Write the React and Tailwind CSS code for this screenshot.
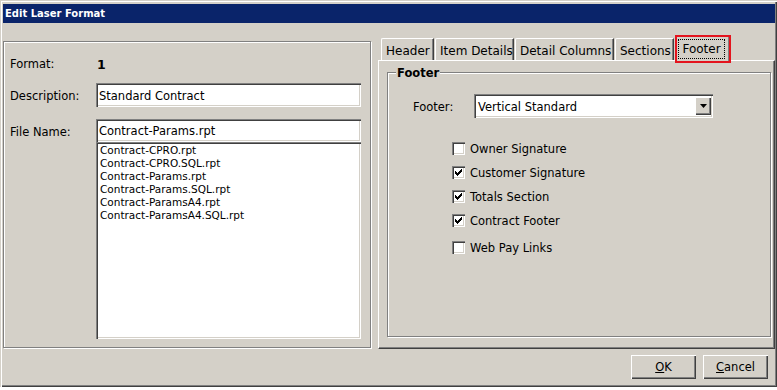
import React from "react";

const sunken =
  "shadow-[inset_1px_1px_0_#808080,inset_2px_2px_0_#404040,inset_-1px_-1px_0_#ffffff,inset_-2px_-2px_0_#d4d0c8]";
const raised =
  "shadow-[inset_1px_1px_0_#ffffff,inset_-1px_-1px_0_#404040,inset_-2px_-2px_0_#808080]";
const etched = "border border-[#808080] shadow-[inset_1px_1px_0_#ffffff,1px_1px_0_#ffffff]";

function Check({ checked, label }) {
  return (
    <div className="flex items-center h-[13px]">
      <div className={`w-[13px] h-[13px] bg-white ${sunken} flex items-center justify-center`}>
        {checked && (
          <svg width="7" height="7" viewBox="0 0 7 7" className="block">
            <path d="M0 2h1v1h1v1h1V3h1V2h1V1h1V0h1v3H6v1H5v1H4v1H3v1H2V6H1V5H0z" fill="#000" shapeRendering="crispEdges" />
          </svg>
        )}
      </div>
      <span className="ml-[5px] leading-[13px] pt-[2px]">{label}</span>
    </div>
  );
}

function Tab({ label, w, selected }) {
  if (selected) {
    return (
      <div
        className="relative z-10 h-[25px] -mb-[1px] bg-[#d4d0c8] border-t border-l border-white border-r border-r-[#404040] shadow-[inset_-1px_0_0_#808080] pl-[2px] pt-[2px]"
        style={{ width: w }}
      >
        <div className="w-[47px] h-[20px] border border-dotted border-black flex items-center justify-center">
          {label}
        </div>
        <div className="absolute left-[-1px] top-[-2px] w-[56px] h-[28px] border-2 border-[#e4141e]" />
      </div>
    );
  }
  return (
    <div
      className="h-[22px] bg-[#d4d0c8] border-t border-l border-white border-r border-r-[#404040] shadow-[inset_-1px_0_0_#808080] rounded-tl-[2px] flex items-center pl-[4px] pt-[3px]"
      style={{ width: w }}
    >
      {label}
    </div>
  );
}

export default function App() {
  const files = [
    "Contract-CPRO.rpt",
    "Contract-CPRO.SQL.rpt",
    "Contract-Params.rpt",
    "Contract-Params.SQL.rpt",
    "Contract-ParamsA4.rpt",
    "Contract-ParamsA4.SQL.rpt",
  ];
  return (
    <div
      className="w-[777px] h-[387px] bg-[#d4d0c8] pl-[3px] pt-[4px] pr-[2px] pb-[2px] flex flex-col text-[11.5px] text-black font-['DejaVu_Sans',sans-serif] shadow-[inset_1px_1px_0_#d4d0c8,inset_2px_2px_0_#ffffff,inset_-1px_-1px_0_#404040,inset_-2px_-2px_0_#808080]"
    >
      {/* Title bar */}
      <div className="h-[19px] bg-[#0a246a] text-white font-bold text-[10px] pl-[2px] flex items-center leading-none">
        Edit Laser Format
      </div>

      <div className="flex">
        {/* Left group */}
        <div className={`mt-[18px] w-[368px] h-[307px] ${etched} flex flex-col`}>
          <div className="mt-[12px] h-[18px] flex items-center pt-[4px]">
            <div className="w-[92px] pl-[6px]">Format:</div>
            <div className="pl-[1px] font-bold text-[12.5px]">1</div>
          </div>
          <div className="mt-[11px] h-[24px] flex items-center">
            <div className="w-[92px] pl-[6px] pt-[4px]">Description:</div>
            <div className={`w-[265px] h-[24px] bg-white ${sunken} pl-[3px] pt-[3px] flex items-center`}>
              Standard Contract
            </div>
          </div>
          <div className="mt-[12px] h-[23px] flex items-center">
            <div className="w-[92px] pl-[6px] pt-[4px]">File Name:</div>
            <div className={`w-[265px] h-[23px] bg-white ${sunken} pl-[3px] pt-[3px] flex items-center`}>
              Contract-Params.rpt
            </div>
          </div>
          <div className="flex">
            <div className="w-[92px]" />
            <div
              className={`w-[265px] h-[197px] bg-white ${sunken} pl-[4px] pt-[2px] text-[10.5px] leading-[13px]`}
            >
              {files.map((f) => (
                <div key={f}>{f}</div>
              ))}
            </div>
          </div>
        </div>

        {/* Right tab control */}
        <div className="ml-[7px] w-[397px] flex flex-col">
          <div className="mt-[13px] h-[24px] pl-[3px] flex items-end gap-[1px] text-[12px]">
            <Tab label="Header" w={53} />
            <Tab label="Item Details" w={79} />
            <Tab label="Detail Columns" w={99} />
            <Tab label="Sections" w={59} />
            <Tab label="Footer" w={55} selected />
          </div>
          <div className="h-[289px] border-t border-l border-white border-r border-b border-r-[#404040] border-b-[#404040] shadow-[inset_-1px_-1px_0_#808080] pl-[8px] pt-[11px]">
            <div className={`relative w-[384px] h-[265px] ${etched}`}>
              <div className="absolute left-[8px] top-[-8px] px-[1px] bg-[#d4d0c8] font-bold leading-[16px]">
                Footer
              </div>
              <div className="mt-[21px] flex items-center h-[24px]">
                <div className="w-[86px] pl-[25px] pt-[4px]">Footer:</div>
                <div className={`w-[239px] h-[24px] bg-white ${sunken} pl-[4px] flex items-center justify-between pr-[2px]`}>
                  <span className="pt-[3px]">Vertical Standard</span>
                  <div className={`w-[16px] h-[18px] bg-[#d4d0c8] ${raised} flex items-center justify-center`}>
                    <svg width="7" height="4" viewBox="0 0 7 4" className="block">
                      <path d="M0 0h7L3.5 4z" fill="#000" />
                    </svg>
                  </div>
                </div>
              </div>
              <div className="ml-[64px] mt-[24px] flex flex-col">
                <Check label="Owner Signature" />
                <div className="h-[11px]" />
                <Check checked label="Customer Signature" />
                <div className="h-[11px]" />
                <Check checked label="Totals Section" />
                <div className="h-[11px]" />
                <Check checked label="Contract Footer" />
                <div className="h-[14px]" />
                <Check label="Web Pay Links" />
              </div>
            </div>
          </div>
        </div>
      </div>

      {/* Buttons */}
      <div className="mt-[6px] flex justify-end gap-[7px] pr-[7px]">
        <div className={`w-[65px] h-[24px] ${raised} flex items-center justify-center pt-[2px]`}>
          <span><span className="underline">O</span>K</span>
        </div>
        <div className={`w-[65px] h-[24px] ${raised} flex items-center justify-center pt-[2px]`}>
          <span><span className="underline">C</span>ancel</span>
        </div>
      </div>
    </div>
  );
}
